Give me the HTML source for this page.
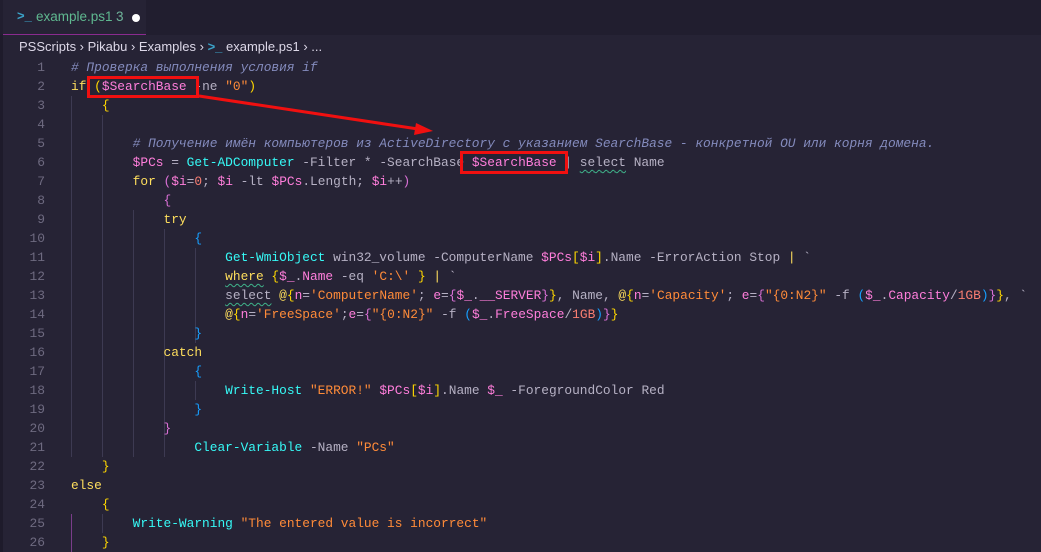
<!DOCTYPE html>
<html><head><meta charset="utf-8"><style>
html,body{margin:0;padding:0;width:1041px;height:552px;overflow:hidden;background:#262335;}
body{position:relative;font-family:"Liberation Mono",monospace;}
.tabbar{position:absolute;left:0;top:0;width:1041px;height:35px;background:#211e2f;}
.tab{position:absolute;left:3px;top:0;width:143px;height:34px;background:#262335;border-bottom:1px solid #8a2b8f;font-family:"Liberation Sans",sans-serif;font-size:13.5px;color:#5fb890;}
.tab .ic{position:absolute;left:14px;top:8px;color:#3ba3c9;font-weight:bold;font-size:13px;}
.tab .nm{position:absolute;left:33px;top:9px;}
.tab .n3{position:absolute;left:113px;top:9px;color:#6fb49a;}
.tab .dot{position:absolute;left:129px;top:14px;width:8px;height:8px;border-radius:50%;background:#fff;}
.left{position:absolute;left:0;top:35px;width:3px;height:517px;background:#1e1b2b;}
.bc{position:absolute;left:19px;top:39px;font-family:"Liberation Sans",sans-serif;font-size:13px;color:#ddd8e8;white-space:pre;}
.bc .ic{color:#3ba3c9;font-weight:bold;}
.code{position:absolute;left:0;top:58px;font-size:12.85px;line-height:19px;white-space:pre;}
.ln{position:absolute;left:0;width:45px;text-align:right;color:#6e6a80;font-size:12.9px;}
.l{position:absolute;left:71px;color:#b6b1c4;}
.c{color:#848bbd;font-style:italic}
.k{color:#fede5d}
.v{color:#ff7edb}
.f{color:#36f9f6}
.s{color:#ff8b39}
.y{color:#ffd700}
.p{color:#da70d6}
.b{color:#179fff}
.n{color:#f97e72}
.w{text-decoration:underline wavy #3fb38a;text-underline-offset:3px;text-decoration-thickness:1px}
.g{position:absolute;width:1px;background:#3d3a52;}
</style></head><body>
<div class="tabbar"><div class="tab"><span class="ic">&gt;_</span><span class="nm">example.ps1</span><span class="n3">3</span><span class="dot"></span></div></div>
<div class="left"></div>
<div class="bc">PSScripts › Pikabu › Examples › <span class="ic">&gt;_</span> example.ps1 › ...</div>

<div class="g" style="left:71px;top:96px;height:361px"></div>
<div class="g" style="left:102px;top:115px;height:342px"></div>
<div class="g" style="left:133px;top:210px;height:247px"></div>
<div class="g" style="left:164px;top:229px;height:228px"></div>
<div class="g" style="left:195px;top:248px;height:95px"></div>
<div class="g" style="left:195px;top:381px;height:19px"></div>
<div class="g" style="left:164px;top:362px;height:57px"></div>
<div class="g" style="left:71px;top:514px;height:38px;background:#7a3d8a"></div>
<div class="g" style="left:102px;top:514px;height:19px"></div>

<div class="code">
<div class="ln" style="top:0">1</div><div class="l" style="top:0"><span class="c"># Проверка выполнения условия if</span></div>
<div class="ln" style="top:19px">2</div><div class="l" style="top:19px"><span class="k">if</span> <span class="y">(</span><span class="v">$SearchBase</span> -ne <span class="s">"0"</span><span class="y">)</span></div>
<div class="ln" style="top:38px">3</div><div class="l" style="top:38px">    <span class="y">{</span></div>
<div class="ln" style="top:57px">4</div>
<div class="ln" style="top:76px">5</div><div class="l" style="top:76px">        <span class="c"># Получение имён компьютеров из ActiveDirectory с указанием SearchBase - конкретной OU или корня домена.</span></div>
<div class="ln" style="top:95px">6</div><div class="l" style="top:95px">        <span class="v">$PCs</span> = <span class="f">Get-ADComputer</span> -Filter * -SearchBase <span class="v">$SearchBase</span> | <span class="w">select</span> Name</div>
<div class="ln" style="top:114px">7</div><div class="l" style="top:114px">        <span class="k">for</span> <span class="p">(</span><span class="v">$i</span>=<span class="n">0</span>; <span class="v">$i</span> -lt <span class="v">$PCs</span>.Length; <span class="v">$i</span>++<span class="p">)</span></div>
<div class="ln" style="top:133px">8</div><div class="l" style="top:133px">            <span class="p">{</span></div>
<div class="ln" style="top:152px">9</div><div class="l" style="top:152px">            <span class="k">try</span></div>
<div class="ln" style="top:171px">10</div><div class="l" style="top:171px">                <span class="b">{</span></div>
<div class="ln" style="top:190px">11</div><div class="l" style="top:190px">                    <span class="f">Get-WmiObject</span> win32_volume -ComputerName <span class="v">$PCs</span><span class="y">[</span><span class="v">$i</span><span class="y">]</span>.Name -ErrorAction Stop <span class="k">|</span> `</div>
<div class="ln" style="top:209px">12</div><div class="l" style="top:209px">                    <span class="k w">where</span> <span class="y">{</span><span class="v">$_</span>.<span class="v">Name</span> -eq <span class="s">'C:\'</span> <span class="y">}</span> <span class="k">|</span> `</div>
<div class="ln" style="top:228px">13</div><div class="l" style="top:228px">                    <span class="w">select</span> <span class="k">@</span><span class="y">{</span><span class="v">n</span>=<span class="s">'ComputerName'</span>; <span class="v">e</span>=<span class="p">{</span><span class="v">$_</span>.<span class="v">__SERVER</span><span class="p">}</span><span class="y">}</span>, Name, <span class="k">@</span><span class="y">{</span><span class="v">n</span>=<span class="s">'Capacity'</span>; <span class="v">e</span>=<span class="p">{</span><span class="s">"{0:N2}"</span> -f <span class="b">(</span><span class="v">$_</span>.<span class="v">Capacity</span>/<span class="n">1GB</span><span class="b">)</span><span class="p">}</span><span class="y">}</span>, `</div>
<div class="ln" style="top:247px">14</div><div class="l" style="top:247px">                    <span class="k">@</span><span class="y">{</span><span class="v">n</span>=<span class="s">'FreeSpace'</span>;<span class="v">e</span>=<span class="p">{</span><span class="s">"{0:N2}"</span> -f <span class="b">(</span><span class="v">$_</span>.<span class="v">FreeSpace</span>/<span class="n">1GB</span><span class="b">)</span><span class="p">}</span><span class="y">}</span></div>
<div class="ln" style="top:266px">15</div><div class="l" style="top:266px">                <span class="b">}</span></div>
<div class="ln" style="top:285px">16</div><div class="l" style="top:285px">            <span class="k">catch</span></div>
<div class="ln" style="top:304px">17</div><div class="l" style="top:304px">                <span class="b">{</span></div>
<div class="ln" style="top:323px">18</div><div class="l" style="top:323px">                    <span class="f">Write-Host</span> <span class="s">"ERROR!"</span> <span class="v">$PCs</span><span class="y">[</span><span class="v">$i</span><span class="y">]</span>.Name <span class="v">$_</span> -ForegroundColor Red</div>
<div class="ln" style="top:342px">19</div><div class="l" style="top:342px">                <span class="b">}</span></div>
<div class="ln" style="top:361px">20</div><div class="l" style="top:361px">            <span class="p">}</span></div>
<div class="ln" style="top:380px">21</div><div class="l" style="top:380px">                <span class="f">Clear-Variable</span> -Name <span class="s">"PCs"</span></div>
<div class="ln" style="top:399px">22</div><div class="l" style="top:399px">    <span class="y">}</span></div>
<div class="ln" style="top:418px">23</div><div class="l" style="top:418px"><span class="k">else</span></div>
<div class="ln" style="top:437px">24</div><div class="l" style="top:437px">    <span class="y">{</span></div>
<div class="ln" style="top:456px">25</div><div class="l" style="top:456px">        <span class="f">Write-Warning</span> <span class="s">"The entered value is incorrect"</span></div>
<div class="ln" style="top:475px">26</div><div class="l" style="top:475px">    <span class="y">}</span></div>
</div>

<svg style="position:absolute;left:0;top:0" width="1041" height="552">
<rect x="88.5" y="77.5" width="109" height="19" fill="none" stroke="#f01010" stroke-width="3"/>
<rect x="461.5" y="152.5" width="105" height="20" fill="none" stroke="#f01010" stroke-width="3"/>
<line x1="199" y1="96" x2="418" y2="129" stroke="#f01010" stroke-width="3"/>
<polygon points="433,131 416,123 414,135" fill="#f01010"/>
</svg>
</body></html>
